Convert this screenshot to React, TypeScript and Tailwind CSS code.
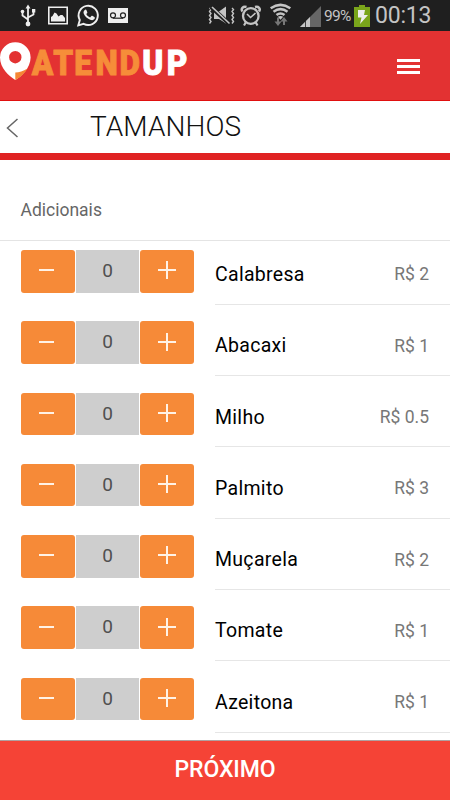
import { useState } from 'react'

interface Extra {
  name: string
  price: string
}

const EXTRAS: Extra[] = [
  { name: 'Calabresa', price: '2' },
  { name: 'Abacaxi',   price: '1' },
  { name: 'Milho',     price: '0.5' },
  { name: 'Palmito',   price: '3' },
  { name: 'Muçarela',  price: '2' },
  { name: 'Tomate',    price: '1' },
  { name: 'Azeitona',  price: '1' },
]

function StatusBar() {
  return (
    <div className="flex h-[31px] shrink-0 items-center bg-[#1f1f1f] text-[#c4c4c4]">
      <svg className="shrink-0" width="150" height="31" viewBox="0 0 150 31" fill="none" stroke="#eee">
        {/* usb */}
        <path d="M28 7v17M22.500 12v3.500l5.500 4M33.500 11v3.500l-5.500 3" strokeWidth="1.800" />
        <path d="M28 4.500l2.500 4h-5z" fill="#eee" stroke="none" />
        <circle cx="28" cy="24" r="2.400" fill="#eee" stroke="none" />
        <circle cx="22.500" cy="11.500" r="1.800" fill="#eee" stroke="none" />
        <path d="M32 9h3.300v3.500H32z" fill="#eee" stroke="none" />
        {/* picture */}
        <path d="M48.800 7.300h18.400v16.400H48.800z" strokeWidth="1.600" />
        <path d="M51 21.500v-4.500l1.500-1 2-3.500 2 1 2 3 2-1.500h2l2.500 3v3.500z" fill="#eee" stroke="none" />
        {/* whatsapp */}
        <path d="M78.300 25.300l1.500-5.300a9.600 9.600 0 1 1 3.800 3.800z" strokeWidth="1.900" />
        <path d="M84.500 10.200c1-1 1.700-.7 2.100.3l.7 1.800c.2.700-.4 1.200-1 1.800.8 1.700 2 2.700 3.800 3.400l1.300-1.400c.4-.4.8-.3 1.300 0l1.700.9c.7.400.5 1.300 0 2-1 1.300-2.500 1.400-4.200.7-3.200-1.200-5.400-3.400-6.500-6.200-.4-1.400-.1-2.500.8-3.300z" fill="#eee" stroke="none" />
        {/* voicemail */}
        <path d="M108 8h20v15h-20z" fill="#eee" stroke="none" />
        <g stroke="#222" strokeWidth="1.200">
          <circle cx="113" cy="15.300" r="2.500" />
          <circle cx="123" cy="15.300" r="2.500" />
          <path d="M113 18.200h10" />
        </g>
      </svg>
      <svg className="ml-[55px] shrink-0" width="117" height="31" viewBox="205 0 117 31" fill="none" stroke="#c4c4c4">
        {/* vibrate, muted */}
        <path d="M209.500 8l1.500 1.500-1.500 2 1.500 2-1.500 2 1.500 2-1.500 2 1.500 2-1.500 2M232 8l1.500 1.500-1.500 2 1.500 2-1.500 2 1.500 2-1.500 2 1.500 2-1.500 2" strokeWidth="1.400" />
        <path d="M214 11.500h5l7-5v17l-7-4.500h-5z" fill="#c4c4c4" stroke="none" />
        <path d="M211 7l18.500 17" stroke="#1f1f1f" strokeWidth="4" />
        <path d="M212 7l17.500 16.500" strokeWidth="1.700" />
        {/* alarm */}
        <circle cx="250.800" cy="16" r="7.800" strokeWidth="2.300" />
        <path d="M247 14l3.500 3.500 5-4.500" strokeWidth="1.600" />
        <path d="M242.500 11.500c-2-2.800.5-5.500 4-4.500M259 11.500c2-2.800-.5-5.500-4-4.500" strokeWidth="2.500" />
        <path d="M246 22l-2 3.500M255.500 22l2 3.500" strokeWidth="2.200" />
        {/* wifi */}
        <path d="M270.700 8.300q9.800-6.800 19.600 0M273.500 11.700q7-5 14 0M276.500 15q4-3 8 0" strokeWidth="2.600" />
        <path d="M277.800 16.800q2.700-1.800 5.400 0l-2.700 3z" fill="#c4c4c4" stroke="none" />
        <path d="M278 17.500v5M284 25v-5" stroke="#777" strokeWidth="2" />
        <path d="M274.500 21.500h7l-3.500 4.500zM280.500 21.500h7l-3.500-4.500z" fill="#777" stroke="none" />
        {/* signal */}
        <path d="M300 27L321 6v21z" fill="#666" stroke="none" />
        <path d="M300 27l10-10v10z" fill="#c4c4c4" stroke="none" />
        <path d="M305.500 19v8" stroke="#1f1f1f" strokeWidth=".8" />
      </svg>
      <span className="ml-[2px] w-[28px] pt-[2px] text-[15.500px] leading-none tracking-[-0.700px]">99%</span>
      <svg className="ml-[2px] shrink-0" width="16" height="31" viewBox="354 0 16 31">
        <path d="M354 7h5V5h6v2h5v20h-16z" fill="#7aa51b" />
        <path d="M358 10h7l-1 5h4l-8 9 1.500-6.500H358z" fill="#eee" />
      </svg>
      <span className="ml-[5px] text-[23px] leading-none tracking-[-0.200px]">00:13</span>
    </div>
  )
}

function Logo() {
  return (
    <svg width="190" height="69" viewBox="0 31 190 69" className="shrink-0">
      <path
        fillRule="evenodd"
        d="M15.300 42.300A15.300 15.300 0 0 1 30.600 57.500C30.600 68 21 77 15.300 80C9 76 0 68 0 57.500A15.300 15.300 0 0 1 15.300 42.300zM15.300 51a6.200 6.200 0 1 0 0 12.400a6.200 6.200 0 1 0 0-12.400z"
        fill="#fff"
      />
      <path d="M15.300 80V72.500Q21 72.500 27.500 68.500Q23 76 15.300 80z" fill="#f58634" />
      <g transform="scale(.92 1)" fontSize="34.500" fontWeight="900" strokeWidth=".9">
        <text x="34.500 57.900 80.800 103.800 130" y="75.200" fill="#f68d39" stroke="#f68d39">ATEND</text>
        <text x="154.700 181.200" y="75.200" fill="#fff" stroke="#fff">UP</text>
      </g>
    </svg>
  )
}

function Stepper() {
  const [count, setCount] = useState(0)

  return (
    <div className="flex h-[42.500px] w-[173px] gap-px">
      <button
        className="flex w-[54px] items-center justify-center rounded-[3px] bg-[#f68a38]"
        onClick={() => setCount(c => Math.max(0, c - 1))}
      >
        <span className="mb-[2px] mr-[3px] h-[2px] w-[15px] bg-[#fff2e6]" />
      </button>
      <div className="flex flex-1 items-center justify-center bg-[#cecece] text-[19px] text-[#505050]">
        {count}
      </div>
      <button
        className="flex w-[54px] items-center justify-center rounded-[3px] bg-[#f68a38]"
        onClick={() => setCount(c => c + 1)}
      >
        <svg className="mb-[2px]" width="18" height="18" viewBox="0 0 18 18">
          <path d="M9 0v18M0 9h18" stroke="#fff2e6" strokeWidth="2" />
        </svg>
      </button>
    </div>
  )
}

export default function App() {
  return (
    <div className="flex h-[800px] w-[450px] flex-col overflow-hidden bg-white font-[Roboto,sans-serif]">
      <StatusBar />

      <header className="flex h-[70px] shrink-0 items-start justify-between border-b border-[#e00f0f] bg-[#e33232] pr-[30px]">
        <Logo />
        <button className="mt-[28px] flex w-[23px] flex-col gap-[3px]">
          <span className="h-[3px] bg-white" />
          <span className="h-[3px] bg-white" />
          <span className="h-[3px] bg-white" />
        </button>
      </header>

      <div className="flex h-[59px] shrink-0 items-center border-b-[7px] border-[#e02222]">
        <svg className="ml-[6px] mt-[2px]" width="13" height="20" viewBox="0 0 13 20" fill="none">
          <path d="M11.500 1L1.500 10l10 9" stroke="#666" strokeWidth="1.500" />
        </svg>
        <h1 className="ml-[71px] text-[28px] font-light leading-none tracking-[0.100px] text-[#111]">TAMANHOS</h1>
      </div>

      <main className="flex min-h-0 flex-1 flex-col overflow-hidden">
        <div className="flex h-[81px] shrink-0 items-center border-b border-[#e4e4e4] pl-[20.500px] pt-5 text-[17.500px] text-[#666]">
          Adicionais
        </div>
        <ul className="-mt-[7.500px]">
          {EXTRAS.map(extra => (
            <li key={extra.name} className="flex h-[71.300px] items-end gap-[21px] pl-[21px]">
              <div className="pb-[12.300px]">
                <Stepper />
              </div>
              <div className="flex h-[62px] flex-1 items-center justify-between border-b border-[#e6e6e6] pr-[21px] pt-[2.500px]">
                <span className="text-[19.500px] tracking-[0.300px] text-black">{extra.name}</span>
                <span className="text-[17.500px] text-[#777]">R$ {extra.price}</span>
              </div>
            </li>
          ))}
        </ul>
      </main>

      <button className="h-[60px] shrink-0 border-t-[1.500px] border-[#b0a0a0] bg-[#f54336] text-[23px] font-medium tracking-[-0.100px] text-white">
        PRÓXIMO
      </button>
    </div>
  )
}
